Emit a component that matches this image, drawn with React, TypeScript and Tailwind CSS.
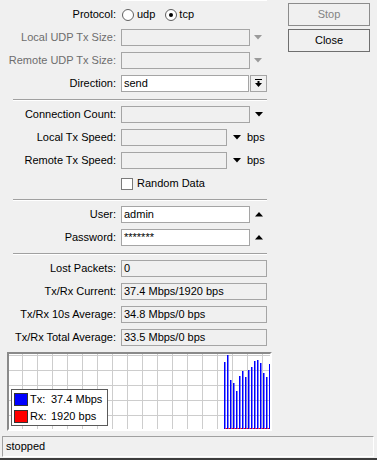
import React from "react";

const bars = [362, 355, 380, 383, 391, 376, 371, 377, 370, 367, 361, 360, 363, 373, 377, 364];

function Row({ label, disabled, children }: { label: string; disabled?: boolean; children?: React.ReactNode }) {
  return (
    <div className="flex items-center h-[17px]">
      <div className={disabled ? "w-[116px] text-right text-[#6d6d6d] whitespace-nowrap" : "w-[116px] text-right text-black whitespace-nowrap"}>
        {label}
      </div>
      <div className="ml-[5px] flex items-center">{children}</div>
    </div>
  );
}

function Field({ className, value }: { className: string; value?: string }) {
  return (
    <div className={"h-[17px] border border-[#a5a5a5] px-[2px] leading-[15px] whitespace-nowrap " + className}>
      {value}
    </div>
  );
}

function Down({ gray }: { gray?: boolean }) {
  return (
    <svg width="8" height="5" viewBox="0 0 8 5" className="block">
      <polygon points="0,0 8,0 4,4.5" fill={gray ? "#9a9a9a" : "#000"} />
    </svg>
  );
}

function Up() {
  return (
    <svg width="8" height="5" viewBox="0 0 8 5" className="block">
      <polygon points="0,4.5 8,4.5 4,0" fill="#000" />
    </svg>
  );
}

function Divider() {
  return <div className="ml-[13px] w-[254px] mt-[7px] mb-[5px] border-t border-b border-t-[#a0a0a0] border-b-white" />;
}

export default function App() {
  return (
    <div
      className="w-[377px] h-[460px] bg-[#f0f0f0] flex flex-col text-[11px] text-black overflow-hidden"
      style={{ fontFamily: '"Liberation Sans", Arial, sans-serif' }}
    >
      <div className="flex">
        {/* left: form + graph */}
        <div className="w-[275px]">
          <div className="ml-[121px] w-[146px] h-px bg-white" />
          <div className="mt-[5px] flex flex-col gap-[6px]">
            <Row label="Protocol:">
              <div className="ml-px w-[12px] h-[12px] rounded-full border border-[#606060] bg-white" />
              <span className="ml-[3px]">udp</span>
              <div className="ml-[10px] w-[12px] h-[12px] rounded-full border border-[#606060] bg-white flex items-center justify-center">
                <div className="w-[4px] h-[4px] rounded-full bg-black" />
              </div>
              <span className="ml-[2px]">tcp</span>
            </Row>
            <Row label="Local UDP Tx Size:" disabled>
              <Field className="w-[129px] bg-[#f0f0f0]" />
              <div className="ml-[4px]"><Down gray /></div>
            </Row>
            <Row label="Remote UDP Tx Size:" disabled>
              <Field className="w-[129px] bg-[#f0f0f0]" />
              <div className="ml-[4px]"><Down gray /></div>
            </Row>
            <Row label="Direction:">
              <Field className="w-[128px] bg-white" value="send" />
              <div className="ml-px w-[17px] h-[17px] border border-[#a5a5a5] bg-[#f0f0f0] flex items-center justify-center">
                <svg width="7" height="9" viewBox="0 0 7 9" className="block">
                  <rect x="0" y="0" width="7" height="1" fill="#000" />
                  <rect x="2.5" y="2" width="2" height="3" fill="#000" />
                  <polygon points="0,4 7,4 3.5,8" fill="#000" />
                </svg>
              </div>
            </Row>
          </div>

          <Divider />

          <div className="flex flex-col gap-[6px]">
            <Row label="Connection Count:">
              <Field className="w-[129px] bg-[#f0f0f0]" />
              <div className="ml-[5px]"><Down /></div>
            </Row>
            <Row label="Local Tx Speed:">
              <Field className="w-[106px] bg-[#f0f0f0]" />
              <div className="ml-[6px]"><Down /></div>
              <span className="ml-[6px]">bps</span>
            </Row>
            <Row label="Remote Tx Speed:">
              <Field className="w-[106px] bg-[#f0f0f0]" />
              <div className="ml-[6px]"><Down /></div>
              <span className="ml-[6px]">bps</span>
            </Row>
            <div className="flex items-center h-[17px] ml-[121px]">
              <div className="w-[12px] h-[12px] border border-[#7a7a7a] bg-white" />
              <span className="ml-[4px]">Random Data</span>
            </div>
          </div>

          <Divider />

          <div className="flex flex-col gap-[6px]">
            <Row label="User:">
              <Field className="w-[129px] bg-white" value="admin" />
              <div className="ml-[5px]"><Up /></div>
            </Row>
            <Row label="Password:">
              <Field className="w-[129px] bg-white" value="*******" />
              <div className="ml-[5px]"><Up /></div>
            </Row>
          </div>

          <Divider />

          <div className="flex flex-col gap-[6px]">
            <Row label="Lost Packets:">
              <Field className="w-[146px] bg-[#f0f0f0]" value="0" />
            </Row>
            <Row label="Tx/Rx Current:">
              <Field className="w-[146px] bg-[#f0f0f0]" value="37.4 Mbps/1920 bps" />
            </Row>
            <Row label="Tx/Rx 10s Average:">
              <Field className="w-[146px] bg-[#f0f0f0]" value="34.8 Mbps/0 bps" />
            </Row>
            <Row label="Tx/Rx Total Average:">
              <Field className="w-[146px] bg-[#f0f0f0]" value="33.5 Mbps/0 bps" />
            </Row>
          </div>

          {/* graph */}
          <div className="relative ml-[7px] mt-[6px] w-[265px] h-[79px] border-2 border-t-[#8a8a8a] border-l-[#8a8a8a] border-r-white border-b-white bg-white">
            <svg width="261" height="75" viewBox="0 0 261 75" className="block">
              {Array.from({ length: 17 }).map((_, k) => (
                <rect key={"v" + k} x={13 + 15 * k} y={0} width={1} height={75} fill="#cdcdcd" />
              ))}
              {Array.from({ length: 5 }).map((_, k) => (
                <rect key={"h" + k} x={0} y={1 + 15 * k} width={261} height={1} fill="#cdcdcd" />
              ))}
              {bars.map((top, i) => (
                <g key={i}>
                  <rect x={215 + 3 * i} y={top - 354} width={1.5} height={75 - (top - 354)} fill="#0000ff" />
                  <rect x={216.5 + 3 * i} y={74} width={1.5} height={1} fill="#ff0000" />
                </g>
              ))}
            </svg>
            <div className="absolute left-[2px] top-[35px] w-[97px] h-[37px] border border-[#5a5a5a] bg-white pl-[2px] pt-[3px] flex flex-col gap-[4px]">
              <div className="flex items-center h-[13px]">
                <div className="w-[14px] h-[13px] border border-[#333] bg-[#0000ff]" />
                <span className="ml-[2px] w-[21px]">Tx:</span>
                <span>37.4 Mbps</span>
              </div>
              <div className="flex items-center h-[13px]">
                <div className="w-[14px] h-[13px] border border-[#333] bg-[#ff0000]" />
                <span className="ml-[2px] w-[21px]">Rx:</span>
                <span>1920 bps</span>
              </div>
            </div>
          </div>
        </div>

        {/* right: buttons */}
        <div className="ml-[13px] pt-[3px] flex flex-col gap-[3px]">
          <button className="w-[82px] h-[23px] border border-[#8c8c8c] bg-[#f0f0f0] text-[#838383] text-[11px]">Stop</button>
          <button className="w-[82px] h-[23px] border border-[#6f6f6f] bg-[#f0f0f0] text-black text-[11px]">Close</button>
        </div>
      </div>

      {/* status bar */}
      <div className="ml-[2px] mt-[5px] w-[372px] h-[21px] border border-t-[#a0a0a0] border-l-[#a0a0a0] border-r-white border-b-white pl-[3px] leading-[19px]">
        stopped
      </div>
      <div className="mt-auto h-[2px] bg-[#3c3c3c]" />
    </div>
  );
}
